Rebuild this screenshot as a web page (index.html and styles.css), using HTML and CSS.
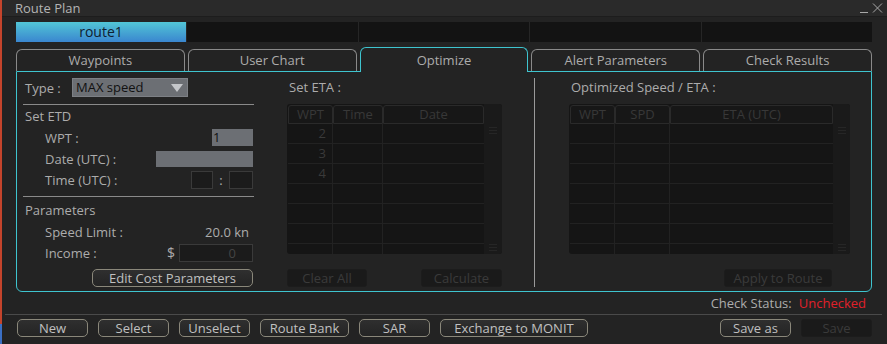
FILE: index.html
```html
<!DOCTYPE html>
<html lang="en">
<head>
    <meta charset="UTF-8">
    <title>Route Plan</title>
    <link rel="stylesheet" href="styles.css">
</head>
<body>
    <div class="window">
        <div class="titlebar">
            <span class="title">Route Plan</span>
            <svg class="controls" width="30" height="14" viewBox="0 0 30 14">
                <path d="M6 11.5h8" stroke="#a8a8a8" stroke-width="1"/>
                <path d="M19 2.5l9 9M28 2.5l-9 9" stroke="#a8a8a8" stroke-width="1"/>
            </svg>
        </div>

        <div class="routes">
            <div class="route active">route1</div>
            <div class="route"></div>
            <div class="route"></div>
            <div class="route"></div>
            <div class="route"></div>
        </div>

        <div class="tabs">
            <div class="tab">Waypoints</div>
            <div class="tab">User Chart</div>
            <div class="tab active">Optimize</div>
            <div class="tab">Alert Parameters</div>
            <div class="tab">Check Results</div>
        </div>

        <div class="panel">
            <div class="opt-left">
                <div class="type-row">
                    <span class="type-label">Type :</span>
                    <div class="select">MAX speed<span class="arrow"></span></div>
                </div>
                <div class="hr"></div>
                <div class="sec-title">Set ETD</div>
                <div class="field">
                    <span>WPT :</span>
                    <div class="input light wpt">1</div>
                </div>
                <div class="field">
                    <span>Date (UTC) :</span>
                    <div class="input light date"></div>
                </div>
                <div class="field">
                    <span>Time (UTC) :</span>
                    <div class="time">
                        <div class="input dark hh"></div>
                        <span class="colon">:</span>
                        <div class="input dark mm"></div>
                    </div>
                </div>
                <div class="hr second"></div>
                <div class="sec-title params">Parameters</div>
                <div class="field">
                    <span>Speed Limit :</span>
                    <span class="value">20.0 kn</span>
                </div>
                <div class="field">
                    <span>Income :</span>
                    <div class="income">
                        <span class="dollar">$</span>
                        <div class="input dark money">0</div>
                    </div>
                </div>
                <button class="btn edit-cost">Edit Cost Parameters</button>
            </div>

            <div class="opt-mid">
                <div class="col-title">Set ETA :</div>
                <div class="table">
                    <div class="tbody">
                        <div class="thead">
                            <div class="th c1">WPT</div>
                            <div class="th c2">Time</div>
                            <div class="th c3">Date</div>
                        </div>
                        <div class="tr"><div class="td c1 num">2</div><div class="td c2"></div><div class="td c3"></div></div>
                        <div class="tr"><div class="td c1 num">3</div><div class="td c2"></div><div class="td c3"></div></div>
                        <div class="tr"><div class="td c1 num">4</div><div class="td c2"></div><div class="td c3"></div></div>
                        <div class="tr"><div class="td c1"></div><div class="td c2"></div><div class="td c3"></div></div>
                        <div class="tr"><div class="td c1"></div><div class="td c2"></div><div class="td c3"></div></div>
                        <div class="tr"><div class="td c1"></div><div class="td c2"></div><div class="td c3"></div></div>
                        <div class="tr last"><div class="td c1"></div><div class="td c2"></div><div class="td c3"></div></div>
                    </div>
                    <div class="scroll"></div>
                </div>
                <div class="btn-row">
                    <button class="btn off clear">Clear All</button>
                    <button class="btn off calc">Calculate</button>
                </div>
            </div>

            <div class="vsep"></div>

            <div class="opt-right">
                <div class="col-title">Optimized Speed / ETA :</div>
                <div class="table wide">
                    <div class="tbody">
                        <div class="thead">
                            <div class="th c1">WPT</div>
                            <div class="th c2">SPD</div>
                            <div class="th c3">ETA (UTC)</div>
                        </div>
                        <div class="tr"><div class="td c1"></div><div class="td c2"></div><div class="td c3"></div></div>
                        <div class="tr"><div class="td c1"></div><div class="td c2"></div><div class="td c3"></div></div>
                        <div class="tr"><div class="td c1"></div><div class="td c2"></div><div class="td c3"></div></div>
                        <div class="tr"><div class="td c1"></div><div class="td c2"></div><div class="td c3"></div></div>
                        <div class="tr"><div class="td c1"></div><div class="td c2"></div><div class="td c3"></div></div>
                        <div class="tr"><div class="td c1"></div><div class="td c2"></div><div class="td c3"></div></div>
                        <div class="tr last"><div class="td c1"></div><div class="td c2"></div><div class="td c3"></div></div>
                    </div>
                    <div class="scroll"></div>
                </div>
                <div class="btn-row right">
                    <button class="btn off apply">Apply to Route</button>
                </div>
            </div>
        </div>

        <div class="status">Check Status:<span class="unchecked">Unchecked</span></div>

        <div class="footer">
            <button class="btn">New</button>
            <button class="btn">Select</button>
            <button class="btn">Unselect</button>
            <button class="btn bank">Route Bank</button>
            <button class="btn">SAR</button>
            <button class="btn monit">Exchange to MONIT</button>
            <div class="footer-right">
                <button class="btn">Save as</button>
                <button class="btn off">Save</button>
            </div>
        </div>
    </div>
</body>
</html>
```

FILE: styles.css
```css
body {
    margin: 0;
    background: #232323;
    font-family: "Open Sans", "Noto Sans", sans-serif;
    font-size: 13px;
    color: #acacac;
}
.window {
    width: 885px;
    height: 344px;
    border-left: 2px solid;
    border-image: linear-gradient(#c4442c 94%, #3b6fc4 94%) 1;
    background: #232323;
    overflow: hidden;
}
.titlebar {
    height: 16px;
    background: #2a2a2a;
    border-bottom: 1px solid #1d1d1d;
    display: flex;
    align-items: center;
    justify-content: space-between;
}
.title {
    padding-left: 13px;
    font-size: 13px;
    line-height: 16px;
    color: #b4b4b4;
}
.controls {
    margin-right: 3px;
}
.routes {
    display: flex;
    margin: 5px 15px 0 14px;
    height: 20px;
    background: #131313;
}
.route {
    flex: 1;
    border-left: 1px solid #262626;
}
.route.active {
    flex: 0 0 170px;
    border-left: none;
    background: linear-gradient(#52c6d6, #3a86cf);
    color: #102030;
    text-align: center;
    font-size: 14px;
    line-height: 20px;
}
.tabs {
    display: flex;
    align-items: flex-end;
    gap: 3px;
    height: 24px;
    margin: 5px 15px 0 14px;
}
.tab {
    flex: 1;
    height: 22px;
    box-sizing: border-box;
    border: 1px solid #8a8a8a;
    border-bottom: none;
    border-radius: 6px 6px 0 0;
    text-align: center;
    line-height: 21px;
    color: #acacac;
}
.tab.active {
    height: 25px;
    margin-bottom: -1px;
    border-color: #3ec4cf;
    background: #232323;
    line-height: 24px;
    position: relative;
    z-index: 1;
}
.panel {
    display: flex;
    height: 221px;
    box-sizing: border-box;
    margin: 0 15px 0 14px;
    border: 1px solid #3ec4cf;
    border-radius: 0 0 6px 6px;
}

/* left column */
.opt-left {
    display: flex;
    flex-direction: column;
    width: 231px;
    margin-left: 6px;
    padding-top: 6px;
}
.type-row {
    display: flex;
    align-items: center;
    height: 19px;
}
.type-label {
    width: 49px;
    padding-left: 2px;
    box-sizing: border-box;
}
.select {
    position: relative;
    width: 116px;
    height: 19px;
    box-sizing: border-box;
    background: #6c6f74;
    border: 1px solid #7d8085;
    color: #111;
    padding-left: 3px;
    line-height: 17px;
    font-size: 13px;
}
.arrow {
    position: absolute;
    right: 4px;
    top: 5px;
    border-left: 6px solid transparent;
    border-right: 6px solid transparent;
    border-top: 8px solid #c4c6ca;
}
.hr {
    margin-top: 7px;
    border-top: 1px solid #8a8a8a;
}
.hr.second {
    margin-top: 6px;
}
.sec-title {
    height: 21px;
    line-height: 21px;
    margin-top: 1px;
    padding-left: 2px;
}
.sec-title.params {
    margin-top: 3px;
}
.field {
    display: flex;
    align-items: center;
    justify-content: space-between;
    height: 21px;
    padding-left: 22px;
    padding-right: 1px;
}
.input {
    box-sizing: border-box;
    font-size: 13px;
}
.input.light {
    background: #6c6f74;
    color: #111;
    height: 17px;
    line-height: 17px;
}
.input.dark {
    background: #1b1b1b;
    border: 1px solid #3a3a3a;
    height: 18px;
}
.wpt {
    width: 41px;
    padding-left: 1px;
}
.date {
    width: 97px;
    height: 16px !important;
}
.time {
    display: flex;
    align-items: center;
}
.hh {
    width: 22px;
}
.mm {
    width: 24px;
}
.colon {
    width: 16px;
    text-align: center;
}
.value {
    padding-right: 4px;
}
.income {
    display: flex;
    align-items: center;
}
.dollar {
    width: 12px;
    font-size: 14px;
}
.money {
    width: 74px;
    text-align: right;
    padding-right: 16px;
    color: #444;
    line-height: 16px;
}
.btn {
    height: 18px;
    box-sizing: border-box;
    padding: 0;
    border: 1px solid #8a877a;
    border-radius: 5px;
    background: linear-gradient(#2f2f2f, #242424);
    color: #c0c0c0;
    font-family: "Open Sans", "Noto Sans", sans-serif;
    font-size: 13px;
    line-height: 16px;
}
.btn.off {
    border: 1px solid #1c1c1c;
    border-radius: 3px;
    background: #1a1a1a;
    color: #3a3a3a;
}
.edit-cost {
    width: 161px;
    margin-top: 6px;
    align-self: flex-end;
    margin-right: 1px;
}

/* tables */
.opt-mid,
.opt-right {
    display: flex;
    flex-direction: column;
    padding-top: 6px;
}
.opt-mid {
    width: 215px;
    margin-left: 33px;
}
.opt-right {
    width: 281px;
    margin-left: 34px;
}
.col-title {
    height: 19px;
    line-height: 19px;
    padding-left: 2px;
}
.vsep {
    width: 1px;
    height: 209px;
    margin-top: 6px;
    margin-left: 32px;
    background: #9a9a9a;
}
.table {
    display: flex;
    height: 150px;
    margin-top: 7px;
    background: #151515;
    border-radius: 3px;
    overflow: hidden;
}
.tbody {
    padding-left: 1px;
}
.thead {
    display: flex;
    height: 19px;
    margin-top: 1px;
}
.th {
    box-sizing: border-box;
    border: 1px solid #2a2a2a;
    border-radius: 3px 3px 0 0;
    background: #171717;
    text-align: center;
    color: #383838;
    line-height: 17px;
}
.tr {
    display: flex;
    height: 20px;
}
.td {
    box-sizing: border-box;
    border-right: 1px solid #222;
    border-bottom: 1px solid #222;
    color: #3a3a3a;
    line-height: 19px;
}
.tr.last .td {
    border-bottom: none;
}
.td.c3 {
    border-right: none;
}
.num {
    text-align: right;
    padding-right: 6px;
}
.c1 { width: 45px; }
.c2 { width: 50px; }
.c3 { width: 101px; }
.wide .c2 { width: 55px; }
.wide .c3 { width: 163px; }
.scroll {
    flex: 1;
    background: #1a1a1a;
    position: relative;
}
.scroll::before,
.scroll::after {
    content: "";
    position: absolute;
    left: 5px;
    width: 8px;
    height: 7px;
    background: repeating-linear-gradient(#262626 0 1px, transparent 1px 3px);
}
.scroll::before {
    top: 23px;
}
.scroll::after {
    bottom: 3px;
}
.btn-row {
    display: flex;
    justify-content: space-between;
    margin-top: 15px;
}
.btn-row.right {
    justify-content: flex-end;
    padding-right: 18px;
}
.clear { width: 80px; }
.calc { width: 81px; }
.apply { width: 108px; }

/* bottom */
.status {
    height: 20px;
    margin-top: 1px;
    line-height: 20px;
    text-align: right;
    padding-right: 21px;
}
.unchecked {
    color: #e0202a;
    margin-left: 7px;
}
.footer {
    display: flex;
    gap: 10px;
    margin: 1px 5px 0 3px;
    padding: 4px 10px 0 12px;
    border-top: 1px solid #4a4a4a;
}
.footer .btn {
    width: 71px;
}
.footer .bank {
    width: 89px;
}
.footer .monit {
    width: 148px;
}
.footer-right {
    display: flex;
    gap: 10px;
    margin-left: auto;
}
```
